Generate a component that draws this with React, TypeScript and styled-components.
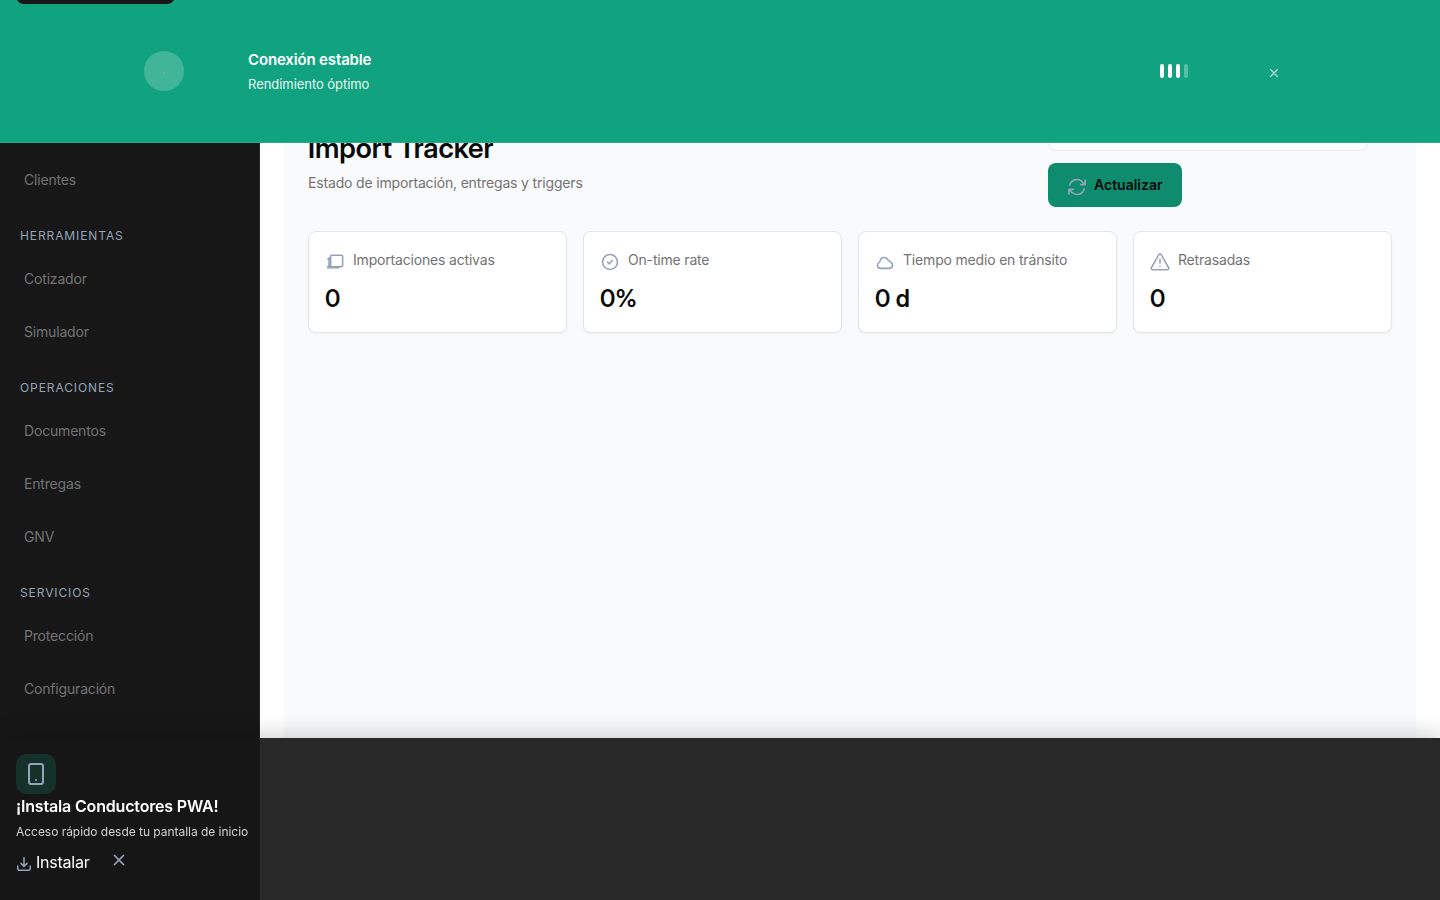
import React from "react";
import styled, { createGlobalStyle } from "styled-components";

const GlobalStyle = createGlobalStyle`
  * { box-sizing: border-box; }
  html, body { margin: 0; height: 100%; overflow: hidden; }
  body { font-family: Inter, sans-serif; background: #fff; color: #0a0a0a; }
  h1, p { margin: 0; }
  button { font-family: inherit; border: 0; background: none; padding: 0; }
`;

const Shell = styled.div`
  display: flex;
  height: 900px;
`;

const SkipLink = styled.a`
  position: fixed;
  z-index: 30;
  top: -36px;
  left: 16px;
  width: 159px;
  height: 40px;
  border-radius: 8px;
  background: #171717;
`;

const Banner = styled.section`
  position: fixed;
  z-index: 20;
  top: 0;
  left: 0;
  right: 0;
  height: 143px;
  padding: 0 144px;
  display: flex;
  align-items: center;
  background: #11a37f;
  border-bottom: 1px solid #2bad8d;
  color: #fff;
`;

const StatusDot = styled.div`
  width: 40px;
  height: 40px;
  margin-right: 64px;
  border-radius: 50%;
  background: rgba(255, 255, 255, 0.2);
  display: flex;
  align-items: center;
  justify-content: center;
  &::after {
    content: "";
    width: 2px;
    height: 2px;
    margin-top: 3px;
    background: #94a3b8;
    opacity: 0.8;
  }
`;

const BannerText = styled.div`
  flex: 1;
`;

const BannerTitle = styled.p`
  padding-top: 1px;
  font-size: 15px;
  line-height: 24px;
  font-weight: 600;
  letter-spacing: -0.15px;
`;

const BannerNote = styled.p`
  margin: 2px 0 1px;
  font-size: 13px;
  line-height: 20px;
  letter-spacing: -0.05px;
  opacity: 0.9;
`;

const Signal = styled.div`
  display: flex;
  gap: 4px;
  margin-right: 81px;
`;

const SignalBar = styled.span<{ $on: boolean }>`
  width: 4px;
  height: 14px;
  border-radius: 2px;
  background: rgba(255, 255, 255, ${(p) => (p.$on ? 1 : 0.3)});
`;

const BannerClose = styled.button`
  display: flex;
  margin: 4px 17px 0 0;
  color: #fff;
  opacity: 0.9;
`;

const Sidebar = styled.nav`
  width: 260px;
  flex: none;
  padding-top: 153px;
  background: #171717;
  border-right: 1px solid #262626;
`;

const NavHeading = styled.div`
  height: 46px;
  padding: 12px 20px 0;
  display: flex;
  align-items: center;
  font-size: 12px;
  letter-spacing: 0.9px;
  color: #94a3b8;
`;

const NavItem = styled.a`
  height: 53px;
  padding: 0 24px;
  display: flex;
  align-items: center;
  font-size: 14px;
  letter-spacing: -0.18px;
  color: #737373;
`;

const Main = styled.main`
  flex: 1;
  padding: 0 24px;
`;

const Panel = styled.div`
  height: 100%;
  padding: 95px 24px 0;
  background: #f9fafc;
`;

const Header = styled.header`
  height: 136px;
  display: flex;
  justify-content: space-between;
  padding-right: 24px;
`;

const Title = styled.h1`
  margin-top: 35px;
  font-family: "Inter Display", Inter, sans-serif;
  font-size: 28px;
  line-height: 36px;
  font-weight: 600;
`;

const Subtitle = styled.p`
  margin-top: 7px;
  font-size: 14px;
  line-height: 20px;
  letter-spacing: -0.17px;
  color: #737373;
`;

const Actions = styled.div`
  width: 320px;
`;

const SearchBox = styled.div`
  height: 56px;
  margin-bottom: 12px;
  border: 1px solid #e5e7eb;
  border-radius: 8px;
  background: #fff;
`;

const RefreshButton = styled.button`
  width: 134px;
  height: 44px;
  padding: 0 0 2px 20px;
  display: flex;
  align-items: center;
  gap: 8px;
  border-radius: 8px;
  background: #0e8c6d;
  font-size: 14px;
  font-weight: 600;
  color: #0a0a0a;
  svg { margin-top: 5px; }
`;

const Cards = styled.div`
  display: grid;
  grid-template-columns: repeat(4, 1fr);
  gap: 16px;
`;

const Card = styled.article`
  height: 102px;
  padding: 17px 16px;
  border: 1px solid #e5e5e5;
  border-radius: 8px;
  background: #fff;
  box-shadow: 0 1px 2px rgba(0, 0, 0, 0.05);
`;

const CardLabel = styled.div`
  display: flex;
  align-items: center;
  gap: 8px;
  height: 20px;
  font-size: 14px;
  letter-spacing: -0.18px;
  color: #737373;
  svg { margin-top: 5px; }
`;

const CardValue = styled.div`
  margin-top: 14px;
  font-family: "Inter Display", Inter, sans-serif;
  font-size: 24px;
  line-height: 32px;
  font-weight: 600;
`;

const InstallBar = styled.aside`
  position: fixed;
  z-index: 10;
  left: 0;
  right: 0;
  bottom: 0;
  height: 162px;
  padding: 16px;
  background: rgba(23, 23, 23, 0.92);
  box-shadow: 0 -4px 20px rgba(0, 0, 0, 0.18);
  color: #fff;
`;

const InstallIcon = styled.div`
  width: 40px;
  height: 40px;
  display: flex;
  align-items: center;
  justify-content: center;
  border-radius: 10px;
  background: #16302a;
`;

const InstallTitle = styled.p`
  font-size: 16px;
  line-height: 24px;
  font-weight: 600;
  letter-spacing: -0.17px;
`;

const InstallNote = styled.p`
  margin-top: 4px;
  font-size: 12px;
  line-height: 20px;
  letter-spacing: -0.035px;
  color: #d1d1d1;
`;

const InstallActions = styled.div`
  display: flex;
  align-items: center;
  margin-top: 8px;
`;

const InstallButton = styled.button`
  display: flex;
  align-items: center;
  gap: 4px;
  margin-right: 22px;
  font-size: 16px;
  line-height: 24px;
  letter-spacing: -0.23px;
  color: #fff;
  svg { margin-top: 3px; }
`;

const DismissButton = styled.button`
  display: flex;
  margin-bottom: 5px;
`;

type IconProps = {
  w: number;
  box: string;
  d: string[];
  stroke?: string;
  sw?: number;
};

const Icon = ({ w, box, d, stroke = "#94a3b8", sw = 1.5 }: IconProps) => (
  <svg width={w} height={w} viewBox={box} fill="none" stroke={stroke} strokeWidth={sw} strokeLinecap="round" strokeLinejoin="round">
    {d.map((path) => (
      <path key={path} d={path} />
    ))}
  </svg>
);

const nav = [
  { items: ["Clientes"] },
  { heading: "HERRAMIENTAS", items: ["Cotizador", "Simulador"] },
  { heading: "OPERACIONES", items: ["Documentos", "Entregas", "GNV"] },
  { heading: "SERVICIOS", items: ["Protección", "Configuración"] },
];

const cards = [
  {
    label: "Importaciones activas",
    value: "0",
    d: [
      "M6.6 3.2h10a1 1 0 0 1 1 1v9.6a1 1 0 0 1-1 1h-10a1 1 0 0 1-1-1V4.2a1 1 0 0 1 1-1z",
      "M4.1 5.8v9.4M2.9 7.2l1.2-.9M2.5 15.6h11.5M3 14.2h2",
    ],
  },
  {
    label: "On-time rate",
    value: "0%",
    d: ["M17.5 10a7.5 7.5 0 1 1-15 0 7.5 7.5 0 0 1 15 0z", "M7.6 10.2l1.7 1.6 3-3.3"],
  },
  {
    label: "Tiempo medio en tránsito",
    value: "0 d",
    d: ["M2.5 13.2a3.2 3.2 0 0 0 3.2 3.2h8.6a3.2 3.2 0 0 0 1.5-6c-.6-.3-1-.5-1.2-1.100a2.400 2.400 0 0 0-1.800-1.300A4 4 0 0 0 5.200 8.600c0 .8-.1 1.200-.9 1.800A3.200 3.200 0 0 0 2.500 13.200z"],
  },
  {
    label: "Retrasadas",
    value: "0",
    d: ["M8.7 2.9 1.4 15.6A1.5 1.5 0 0 0 2.7 17.8h14.6a1.5 1.5 0 0 0 1.3-2.2L11.3 2.9a1.5 1.5 0 0 0-2.6 0z", "M10 7.4v3.6M10 14.2v.1"],
  },
];

export default function App() {
  return (
    <>
      <GlobalStyle />
      <SkipLink />
      <Banner>
        <StatusDot />
        <BannerText>
          <BannerTitle>Conexión estable</BannerTitle>
          <BannerNote>Rendimiento óptimo</BannerNote>
        </BannerText>
        <Signal>
          {[true, true, true, false].map((on, i) => (
            <SignalBar key={i} $on={on} />
          ))}
        </Signal>
        <BannerClose aria-label="Cerrar">
          <Icon w={10} box="0 0 10 10" stroke="#fff" sw={1.1} d={["M1.7 1.7l6.6 6.6M8.3 1.7L1.7 8.3"]} />
        </BannerClose>
      </Banner>
      <Shell>
        <Sidebar>
          {nav.map((group) => (
            <React.Fragment key={group.items[0]}>
              {group.heading && <NavHeading>{group.heading}</NavHeading>}
              {group.items.map((item) => (
                <NavItem key={item}>{item}</NavItem>
              ))}
            </React.Fragment>
          ))}
        </Sidebar>
        <Main>
          <Panel>
            <Header>
              <div>
                <Title>Import Tracker</Title>
                <Subtitle>Estado de importación, entregas y triggers</Subtitle>
              </div>
              <Actions>
                <SearchBox />
                <RefreshButton>
                  <Icon
                    w={18}
                    box="2 2 20 20"
                    sw={1.8}
                    d={[
                      "M16.023 9.348h4.992v-.001M2.985 19.644v-4.992m0 0h4.992m-4.993 0l3.181 3.183a8.25 8.25 0 0013.803-3.7M4.031 9.865a8.25 8.25 0 0113.803-3.7l3.181 3.182m0-4.991v4.99",
                    ]}
                  />
                  Actualizar
                </RefreshButton>
              </Actions>
            </Header>
            <Cards>
              {cards.map((card) => (
                <Card key={card.label}>
                  <CardLabel>
                    <Icon w={20} box="0 0 20 20" sw={1.6} d={card.d} />
                    {card.label}
                  </CardLabel>
                  <CardValue>{card.value}</CardValue>
                </Card>
              ))}
            </Cards>
          </Panel>
        </Main>
      </Shell>
      <InstallBar>
        <InstallIcon>
          <Icon w={24} box="0 0 24 24" sw={2} d={["M7 2h10a2 2 0 0 1 2 2v16a2 2 0 0 1-2 2H7a2 2 0 0 1-2-2V4a2 2 0 0 1 2-2z", "M12 18h.01"]} />
        </InstallIcon>
        <InstallTitle>¡Instala Conductores PWA!</InstallTitle>
        <InstallNote>Acceso rápido desde tu pantalla de inicio</InstallNote>
        <InstallActions>
          <InstallButton>
            <Icon w={16} box="0 0 16 16" d={["M1.8 10v2.5a1.8 1.8 0 0 0 1.8 1.8h8.8a1.8 1.8 0 0 0 1.8-1.8V10", "M8 1.7v8.5M5 7.4l3 3 3-3"]} />
            Instalar
          </InstallButton>
          <DismissButton aria-label="Descartar">
            <Icon w={14} box="0 0 14 14" d={["M2.4 2.4l9.2 9.2M11.6 2.4l-9.2 9.2"]} />
          </DismissButton>
        </InstallActions>
      </InstallBar>
    </>
  );
}
